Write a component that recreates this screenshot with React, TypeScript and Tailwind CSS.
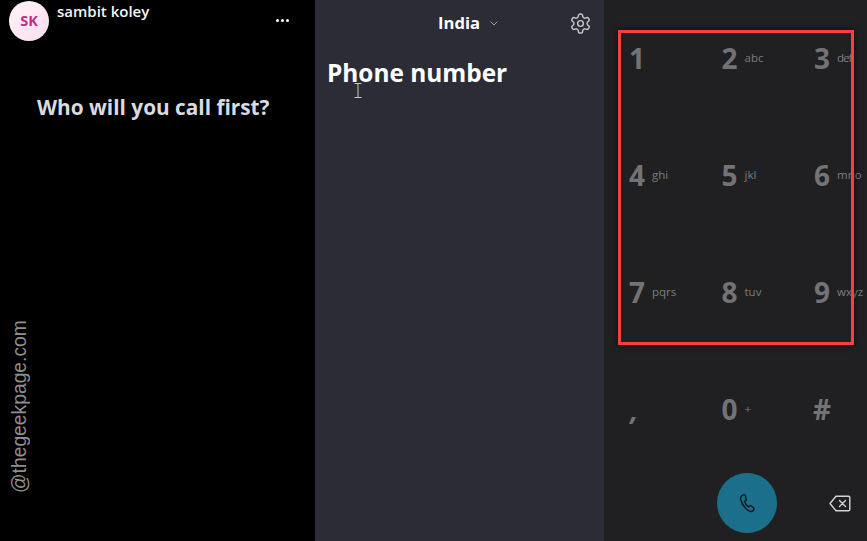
import React from "react";

const font = { fontFamily: '"Open Sans", "Noto Sans", sans-serif' };

function Key({ d, l, slant, tight }: { d: string; l?: string; slant?: boolean; tight?: boolean }) {
  return (
    <div className="flex items-center h-[117px]">
      <span className={slant ? "w-[25px] text-center text-[28px] font-bold italic text-[#737375] leading-none" : "w-[30px] text-center text-[28px] font-bold text-[#737375] leading-none"}>{d}</span>
      {l && <span className={tight ? "text-[11.5px] tracking-[-1px] text-[#7c7c7e] leading-none whitespace-nowrap" : "text-[11.5px] text-[#7c7c7e] leading-none whitespace-nowrap"}>{l}</span>}
    </div>
  );
}

export default function App() {
  return (
    <div className="relative flex w-[867px] h-[541px] overflow-hidden bg-black" style={font}>
      {/* Left */}
      <div className="relative w-[315px] h-full bg-black shrink-0">
        <div className="flex pl-[9px] pr-[26px] pt-px">
          <div className="w-10 h-10 rounded-full bg-gradient-to-br from-[#fff5fa] to-[#fddcec] flex items-center justify-center text-[#c32b87] text-[14.5px] font-bold">SK</div>
          <div className="ml-2 text-[15px] font-semibold text-[#f4f6fa] leading-none pt-[3px]">sambit koley</div>
          <div className="ml-auto mt-[18px] flex gap-[2px]">
            <span className="w-[3px] h-[3px] rounded-full bg-white"></span>
            <span className="w-[3px] h-[3px] rounded-full bg-white"></span>
            <span className="w-[3px] h-[3px] rounded-full bg-white"></span>
          </div>
        </div>
        <div className="mt-[52px] ml-[37px] text-[20.8px] font-bold text-[#d8dbe2] leading-[28px] whitespace-nowrap">Who will you call first?</div>
        <div
          className="absolute left-[9px] top-[320px] h-[173px] text-[19.3px] text-[#8f8f8f] leading-[22px] whitespace-nowrap rotate-180"
          style={{ writingMode: "vertical-rl", fontFamily: '"Liberation Sans", sans-serif' }}
        >
          @thegeekpage.com
        </div>
      </div>

      {/* Middle */}
      <div className="relative w-[289px] h-full bg-[#2b2c35] shrink-0">
        <div className="flex items-center h-[24px] mt-[11px] pl-[123px]">
          <span className="text-[16.6px] font-bold text-white leading-none">India</span>
          <svg className="ml-[9px]" width="10" height="10" viewBox="0 0 10 10" fill="none" stroke="#9a9ba3" strokeWidth="1">
            <path d="M1.5 3.5 5 7l3.5-3.5" />
          </svg>
          <svg className="ml-[70px] text-[#c4c5ca]" width="23" height="23" viewBox="0 0 24 24" fill="none" stroke="currentColor" strokeWidth="1.5" strokeLinecap="round" strokeLinejoin="round">
            <path d="M12.22 2h-.44a2 2 0 0 0-2 2v.18a2 2 0 0 1-1 1.73l-.43.25a2 2 0 0 1-2 0l-.15-.08a2 2 0 0 0-2.73.73l-.22.38a2 2 0 0 0 .73 2.73l.15.1a2 2 0 0 1 1 1.72v.51a2 2 0 0 1-1 1.74l-.15.09a2 2 0 0 0-.73 2.73l.22.38a2 2 0 0 0 2.73.73l.15-.08a2 2 0 0 1 2 0l.43.25a2 2 0 0 1 1 1.73V20a2 2 0 0 0 2 2h.44a2 2 0 0 0 2-2v-.18a2 2 0 0 1 1-1.73l.43-.25a2 2 0 0 1 2 0l.15.08a2 2 0 0 0 2.73-.73l.22-.39a2 2 0 0 0-.73-2.73l-.15-.08a2 2 0 0 1-1-1.74v-.5a2 2 0 0 1 1-1.74l.15-.09a2 2 0 0 0 .73-2.73l-.22-.38a2 2 0 0 0-2.73-.73l-.15.08a2 2 0 0 1-2 0l-.43-.25a2 2 0 0 1-1-1.73V4a2 2 0 0 0-2-2z" />
            <circle cx="12" cy="12" r="3" />
          </svg>
        </div>
        <div className="mt-[21px] pl-[12px] text-[24.4px] font-bold text-white leading-[34px] whitespace-nowrap">Phone number</div>
        <svg className="absolute left-[39px] top-[83px]" width="8" height="15" viewBox="0 0 8 15" fill="none" stroke="#c9c9c0" strokeWidth="1">
          <path d="M0.5 0.5h7M4 0.5v14M0.5 14.5h7" />
        </svg>
      </div>

      {/* Right */}
      <div className="relative flex-1 h-full bg-[#202022]">
        <div className="pl-[18px] -mt-px grid grid-cols-[92.5px_92.5px_92.5px] w-max">
          <Key d="1" />
          <Key d="2" l="abc" />
          <Key d="3" l="def" tight />
          <Key d="4" l="ghi" />
          <Key d="5" l="jkl" />
          <Key d="6" l="mno" />
          <Key d="7" l="pqrs" />
          <Key d="8" l="tuv" />
          <Key d="9" l="wxyz" />
          <Key d="," slant />
          <Key d="0" l="+" />
          <Key d="#" />
        </div>
        <div className="flex items-center mt-[6px] pl-[113px]">
          <div className="w-[60px] h-[60px] rounded-full bg-[#1b6f8a] flex items-center justify-center">
            <svg width="22" height="22" viewBox="0 0 24 24" fill="none" stroke="#0d1a20" strokeWidth="1.6" strokeLinecap="round" strokeLinejoin="round">
              <path d="M8 3.2 6.6 3.9c-1.7.9-2 2.5-1.4 4.6.9 3.2 2.6 6.4 5 8.9 2 2.1 4 3.6 5.9 3.8 1.7.2 3-.7 3.4-2.1.3-1 0-1.7-.9-2.4l-1.9-1.4c-.8-.6-1.6-.5-2.3.1l-.9.8c-1.9-1.3-3.5-3.6-4.3-6l1.1-.7c.8-.5 1.1-1.3.8-2.2l-.8-2.6C10 3.1 9.1 2.7 8 3.2z" />
            </svg>
          </div>
          <svg className="ml-[52px]" width="22" height="17" viewBox="0 0 22 17" fill="none" stroke="#d4d4d4" strokeWidth="1.4" strokeLinejoin="round">
            <path d="M7 1.2h12.5a1.3 1.3 0 0 1 1.3 1.3v12a1.3 1.3 0 0 1-1.3 1.3H7L1 8.5z" />
            <path d="M10.5 5.5l6 6M16.5 5.5l-6 6" strokeLinecap="round" />
          </svg>
        </div>
      </div>

      {/* Annotation */}
      <div className="absolute left-[618px] top-[30px] w-[236px] h-[315px] border-[3px] border-[#f84040] shadow-[0_0_6px_rgba(0,0,0,0.6)]"></div>
    </div>
  );
}
